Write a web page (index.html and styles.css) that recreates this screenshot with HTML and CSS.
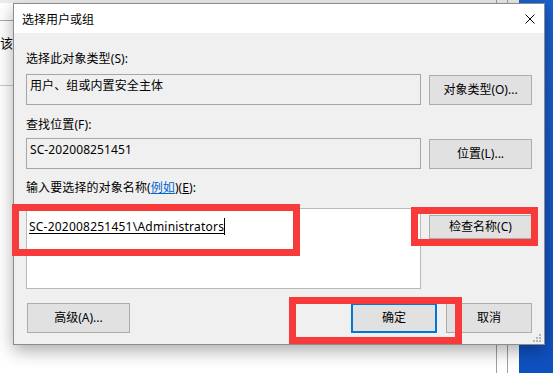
FILE: index.html
```html
<!DOCTYPE html>
<html lang="zh-CN">
<head>
<meta charset="utf-8">
<title>选择用户或组</title>
<link rel="stylesheet" href="styles.css">
</head>
<body>
<div class="desktop">
  <div class="bg-window">
    <div class="bg-top"></div>
    <div class="bg-line bg-line-1"></div>
    <div class="bg-char">该</div>
    <div class="bg-line bg-line-2"></div>
    <div class="bg-vline bg-vline-1"></div>
    <div class="bg-vline bg-vline-2"></div>
  </div>

  <div class="dialog">
    <div class="titlebar">
      <span class="title">选择用户或组</span>
      <svg class="close" width="10" height="10" viewBox="0 0 10 10"><path d="M0.5 0.5 L9.5 9.5 M9.5 0.5 L0.5 9.5" stroke="#000" stroke-width="1" fill="none"/></svg>
    </div>
    <div class="body">
      <div class="label label-1">选择此对象类型(S):</div>
      <div class="row row-1">
        <div class="field">用户、组或内置安全主体</div>
        <div class="btn btn-side">对象类型(O)...</div>
      </div>

      <div class="label label-2">查找位置(F):</div>
      <div class="row row-2">
        <div class="field">SC-202008251451</div>
        <div class="btn btn-side">位置(L)...</div>
      </div>

      <div class="label label-3">输入要选择的对象名称(<span class="link">例如</span>)(<u>E</u>):</div>
      <div class="row row-3">
        <div class="textarea"><span class="resolved">SC-202008251451\Administrators</span><span class="caret"></span></div>
        <div class="btn btn-side btn-check">检查名称(C)</div>
      </div>

      <div class="footer">
        <div class="btn btn-adv">高级(A)...</div>
        <div class="spacer"></div>
        <div class="btn btn-ok">确定</div>
        <div class="btn btn-cancel">取消</div>
      </div>
    </div>
    <svg class="grip" width="8" height="8" viewBox="0 0 8 8">
      <rect x="6" y="0" width="2" height="2" fill="#b4b4b4"/>
      <rect x="3" y="3" width="2" height="2" fill="#b4b4b4"/>
      <rect x="6" y="3" width="2" height="2" fill="#b4b4b4"/>
      <rect x="0" y="6" width="2" height="2" fill="#b4b4b4"/>
      <rect x="3" y="6" width="2" height="2" fill="#b4b4b4"/>
      <rect x="6" y="6" width="2" height="2" fill="#b4b4b4"/>
    </svg>
  </div>

  <div class="mark mark-input"></div>
  <div class="mark mark-check"></div>
  <div class="mark mark-ok"></div>
</div>
</body>
</html>
```

FILE: styles.css
```css
html, body {
  margin: 0;
  padding: 0;
}

body {
  width: 553px;
  height: 373px;
  overflow: hidden;
  font-family: "Noto Sans", "Noto Sans CJK SC", sans-serif;
  font-size: 12px;
  color: #000;
}

.desktop {
  position: relative;
  width: 553px;
  height: 373px;
  background: linear-gradient(180deg, #1a5fcf 0%, #0f50bf 100%);
  overflow: hidden;
}

.bg-window {
  position: absolute;
  left: 0;
  top: 0;
  width: 519px;
  height: 373px;
  background: #fff;
}

.bg-top {
  height: 3px;
  background: #ececec;
}

.bg-line {
  position: absolute;
  left: 0;
  width: 14px;
  height: 1px;
  background: #a9a9a9;
}

.bg-line-1 { top: 20px; }
.bg-line-2 { top: 85px; background: #c8c8c8; }

.bg-char {
  position: absolute;
  left: 0;
  top: 35px;
  font-family: "Noto Sans CJK SC", sans-serif;
  font-size: 13px;
  line-height: 16px;
}

.bg-vline {
  position: absolute;
  top: 0;
  width: 1px;
  height: 373px;
  background: #a0a0a0;
}

.bg-vline-1 { left: 496px; }
.bg-vline-2 { left: 507px; }

/* dialog */
.dialog {
  position: absolute;
  left: 13px;
  top: 3px;
  width: 532px;
  height: 342px;
  box-sizing: border-box;
  border: 1px solid #8c8c8c;
  background: #f0f0f0;
  box-shadow: 0 6px 16px rgba(0, 0, 0, 0.32);
}

.titlebar {
  height: 29px;
  background: #fff;
  display: flex;
  align-items: center;
  padding: 0 9px 0 8px;
}

.title {
  flex: 1;
  line-height: 16px;
  font-family: "Noto Sans CJK SC", sans-serif;
}

.close {
  display: block;
}

.body {
  padding: 0 12px;
}

.label {
  line-height: 16px;
  white-space: nowrap;
  letter-spacing: 0.1px;
}

.label-1 { margin-top: 18px; }
.label-2 { margin-top: 12px; }
.label-3 { margin-top: 11px; }

.link {
  color: #0066cc;
  text-decoration: underline;
}

.row {
  display: flex;
  align-items: flex-start;
  gap: 8px;
}

.row-1 { margin-top: 7px; }
.row-2 { margin-top: 5px; }
.row-3 { margin-top: 12px; }

.field {
  width: 395px;
  height: 31px;
  box-sizing: border-box;
  border: 1px solid #a6a6a6;
  background: #f0f0f0;
  padding: 3px 3px;
  line-height: 16px;
  letter-spacing: 0.1px;
}

.textarea {
  width: 395px;
  height: 81px;
  box-sizing: border-box;
  border: 1px solid #b9b9b9;
  background: #fff;
  padding: 9px 2px;
  line-height: 16px;
  white-space: nowrap;
}

.resolved {
  text-decoration: underline;
  text-underline-offset: 2px;
  letter-spacing: 0.22px;
}

.caret {
  display: inline-block;
  width: 1px;
  height: 17px;
  background: #000;
  vertical-align: -4px;
}

.btn {
  box-sizing: border-box;
  height: 30px;
  border: 1px solid #adadad;
  background: #e1e1e1;
  display: flex;
  align-items: center;
  justify-content: center;
  line-height: 16px;
  white-space: nowrap;
}

.btn-side {
  width: 103px;
  margin-top: 1px;
}

.btn-check {
  height: 24px;
  margin-top: 7px;
}

.footer {
  display: flex;
  gap: 9px;
  margin-top: 14px;
}

.btn-adv {
  width: 103px;
  margin-left: 1px;
}

.spacer {
  flex: 1;
}

.btn-ok,
.btn-cancel {
  width: 86px;
}

.btn-ok {
  border: 2px solid #0078d7;
}

.grip {
  position: absolute;
  right: 3px;
  bottom: 2px;
}

/* red annotation boxes */
.mark {
  position: absolute;
  box-sizing: border-box;
  border: 7px solid #f73a3a;
}

.mark-input {
  left: 12px;
  top: 204px;
  width: 288px;
  height: 52px;
}

.mark-check {
  left: 411px;
  top: 207px;
  width: 127px;
  height: 39px;
}

.mark-ok {
  left: 289px;
  top: 297px;
  width: 173px;
  height: 47px;
}
```
